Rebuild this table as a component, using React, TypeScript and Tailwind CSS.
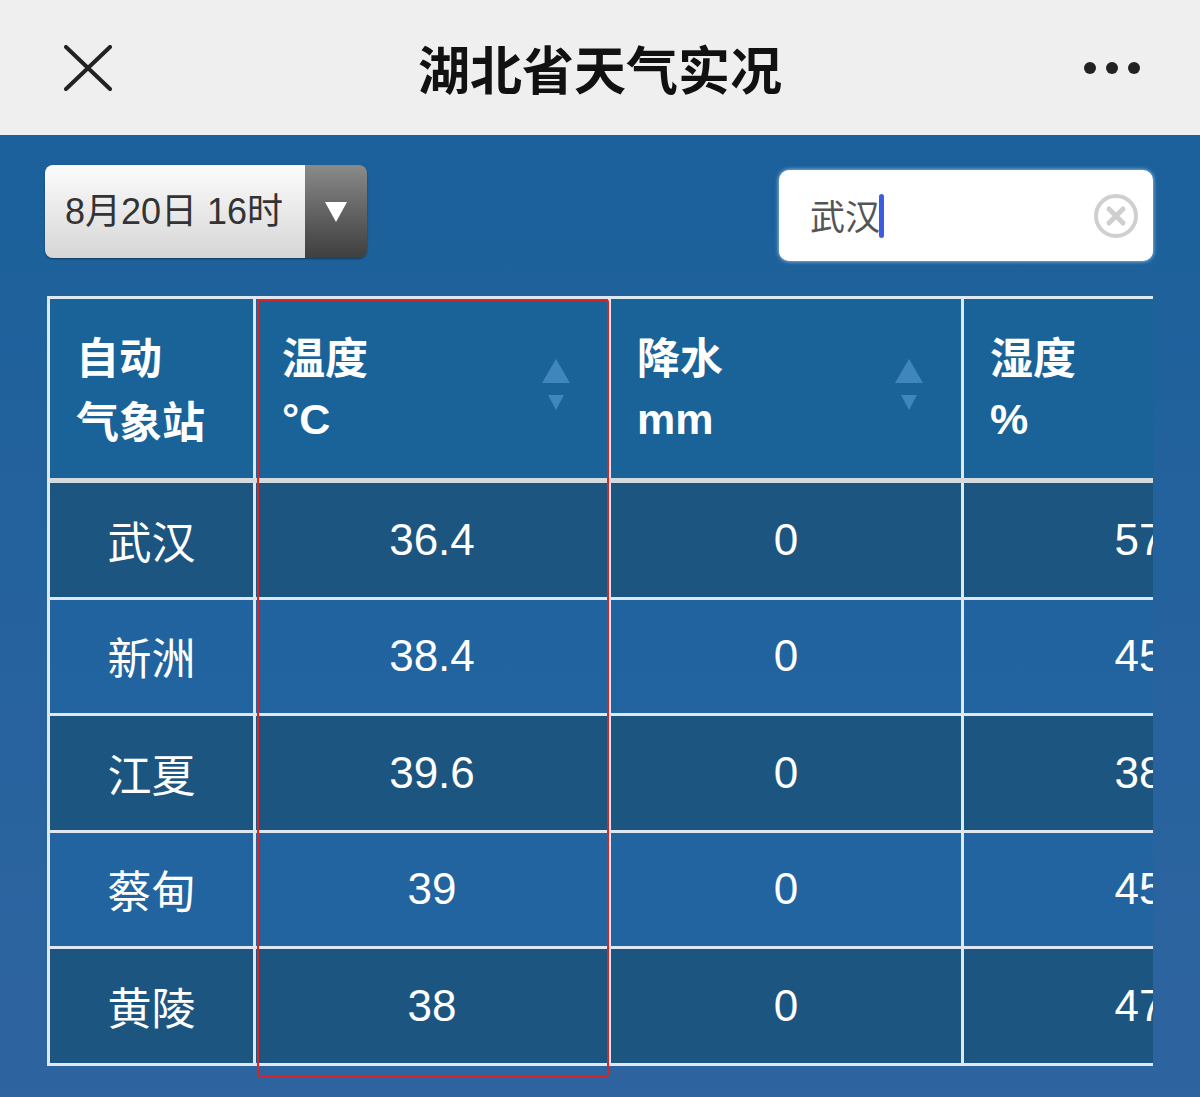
import React from "react";

const rows = [
  { name: "武汉", temp: "36.4", rain: "0", hum: "57" },
  { name: "新洲", temp: "38.4", rain: "0", hum: "45" },
  { name: "江夏", temp: "39.6", rain: "0", hum: "38" },
  { name: "蔡甸", temp: "39", rain: "0", hum: "45" },
  { name: "黄陵", temp: "38", rain: "0", hum: "47" },
];

const cjk = "font-['Noto_Sans_CJK_SC','Noto_Sans',sans-serif]";
const num = "font-['Liberation_Sans','Noto_Sans_CJK_SC',sans-serif]";

const SortArrows = () => (
  <div className="absolute right-[38px] top-[60px] flex flex-col items-center gap-[12px]">
    <svg width="28" height="24" viewBox="0 0 28 24">
      <polygon points="14,0 28,24 0,24" fill="#3f86bd" />
    </svg>
    <svg width="16" height="15" viewBox="0 0 16 15">
      <polygon points="0,0 16,0 8,15" fill="#3f86bd" />
    </svg>
  </div>
);

const HeadCell = ({ w, top, bottom, sort, latin }: { w: string; top: string; bottom: string; sort?: boolean; latin?: boolean }) => (
  <div className={`relative ${w} shrink-0 h-full border-r-[3px] border-[#dfe8f0] pl-[26px] pt-[24px] text-white font-bold text-[43px] leading-[64px] ${cjk}`}>
    <div>{top}</div>
    <div className={latin ? "font-['Liberation_Sans',sans-serif]" : ""}>{bottom}</div>
    {sort && <SortArrows />}
  </div>
);

export default function App() {
  return (
    <div className="w-[1200px] h-[1097px] overflow-hidden bg-gradient-to-b from-[#17609a] to-[#2e64a0]">
      {/* top bar */}
      <div className="h-[135px] bg-[#efefef] flex items-center justify-between px-[64px] relative">
        <svg width="48" height="46" viewBox="0 0 48 46">
          <path d="M2 2 L46 44 M46 2 L2 44" stroke="#222" strokeWidth="4" strokeLinecap="round" />
        </svg>
        <div className={`absolute left-0 right-0 text-center text-[52px] font-bold text-[#111] ${cjk}`}>湖北省天气实况</div>
        <div className="flex gap-[10px] mr-[-4px]">
          <span className="w-[12px] h-[12px] rounded-full bg-[#222]" />
          <span className="w-[12px] h-[12px] rounded-full bg-[#222]" />
          <span className="w-[12px] h-[12px] rounded-full bg-[#222]" />
        </div>
      </div>

      {/* controls */}
      <div className="flex items-start justify-between pl-[45px] pr-[47px] pt-[30px]">
        <div className="flex h-[93px] w-[322px] rounded-[8px] overflow-hidden shadow-[0_1px_2px_rgba(0,0,0,0.4)]">
          <div className={`w-[260px] bg-gradient-to-b from-[#fcfcfc] to-[#d6d6d6] flex items-center pl-[20px] text-[36px] text-[#333] ${num}`}>
            8月20日 16时
          </div>
          <div className="flex-1 bg-gradient-to-b from-[#8a8a8a] to-[#3f3f3f] flex items-center justify-center">
            <svg width="22" height="20" viewBox="0 0 22 20">
              <polygon points="0,0 22,0 11,20" fill="#fff" />
            </svg>
          </div>
        </div>
        <div className="mt-[5px] w-[374px] h-[91px] bg-white rounded-[10px] flex items-center pl-[31px] pr-[14px] shadow-[0_0_4px_rgba(200,230,255,0.9)]">
          <span className={`text-[35px] text-[#555] ${cjk}`}>武汉</span>
          <span className="w-[5px] h-[44px] rounded-full bg-[#3d5de0] ml-[-1px]" />
          <div className="flex-1" />
          <svg width="46" height="46" viewBox="0 0 46 46">
            <circle cx="23" cy="23" r="20" fill="none" stroke="#cfcfcf" strokeWidth="4" />
            <path d="M16 16 L30 30 M30 16 L16 30" stroke="#cfcfcf" strokeWidth="5" strokeLinecap="round" />
          </svg>
        </div>
      </div>

      {/* table */}
      <div className="relative mt-[35px] ml-[47px] w-[1106px]">
        <div className="overflow-hidden">
          <div className="w-[1270px] border-l-[3px] border-t-[3px] border-[#dfe8f0]">
            <div className="flex h-[184px] bg-[#1a6399] border-b-[5px] border-[#d3dae0]">
              <HeadCell w="w-[206px]" top="自动" bottom="气象站" />
              <HeadCell w="w-[355px]" top="温度" bottom="°C" sort latin />
              <HeadCell w="w-[353px]" top="降水" bottom="mm" sort latin />
              <HeadCell w="w-[353px]" top="湿度" bottom="%" latin />
            </div>
            {rows.map((r, i) => (
              <div
                key={r.name}
                className={`flex h-[116.5px] border-b-[3px] border-[#dfe8f0] text-white text-[44px] ${i % 2 === 0 ? "bg-[#1c5580]" : "bg-[#2064a0]/80"}`}
              >
                <div className={`w-[206px] shrink-0 border-r-[3px] border-[#dfe8f0] flex items-center justify-center ${cjk}`}>{r.name}</div>
                <div className={`w-[355px] shrink-0 border-r-[3px] border-[#dfe8f0] flex items-center justify-center ${num}`}>{r.temp}</div>
                <div className={`w-[353px] shrink-0 border-r-[3px] border-[#dfe8f0] flex items-center justify-center ${num}`}>{r.rain}</div>
                <div className={`w-[353px] shrink-0 border-r-[3px] border-[#dfe8f0] flex items-center justify-center ${num}`}>{r.hum}</div>
              </div>
            ))}
          </div>
        </div>
        {/* red highlight annotation */}
        <div className="absolute left-[210px] top-[3px] w-[352px] h-[778px] border-2 border-[#d62626] rounded-[3px] pointer-events-none" />
      </div>
    </div>
  );
}
